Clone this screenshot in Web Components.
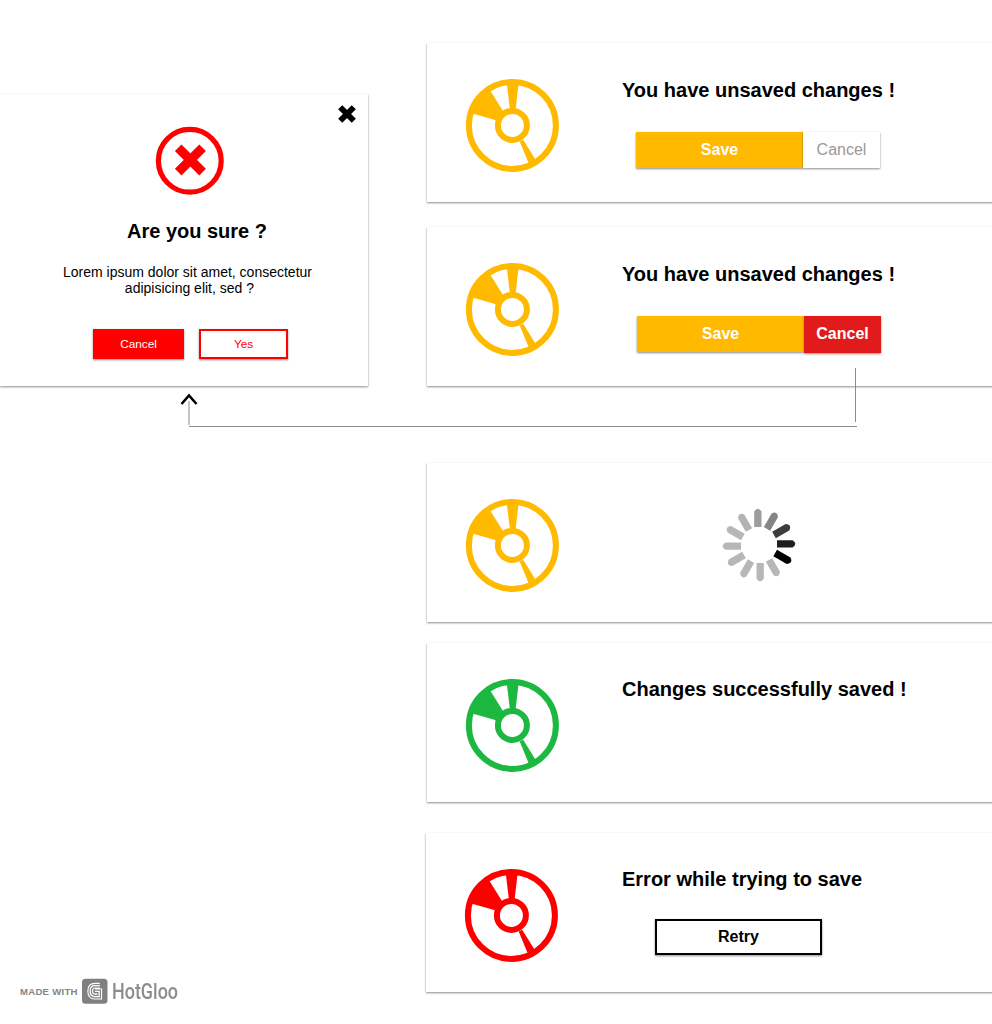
<!DOCTYPE html>
<html lang="en">
<head>
<meta charset="utf-8">
<title>Save states</title>
<style>
html,body{margin:0;padding:0;background:#fff}
body{font-family:"Liberation Sans",Arial,sans-serif;color:#000;width:992px;height:1024px;overflow:hidden}
</style>
</head>
<body>
<save-board></save-board>
<script>
const define = (name, html, setup) => {
  const tpl = document.createElement('template');
  tpl.innerHTML = html;
  customElements.define(name, class extends HTMLElement {
    constructor() {
      super();
      const root = this.attachShadow({mode: 'open'});
      root.append(tpl.content.cloneNode(true));
      if (setup) setup(root);
    }
  });
};

define('disc-icon', `
<style>:host{display:block;width:94px;height:94px;color:#ffba00}svg{display:block}</style>
<svg width="94" height="94" viewBox="-47.4 -47.4 94 94" fill="none" stroke="currentColor" stroke-width="6">
  <circle r="43.5"/><circle r="14.5"/>
  <g fill="currentColor" stroke="none">
    <path d="M-5.6-42L6.2-42L3.2-16L-2.5-16Z"/>
    <path d="M-41-12.2L-15.5-4.8L-9.4-14.5L-22.5-35.5Q-36-27-41-12.2Z"/>
    <path d="M7.3 16L10.8 14.4L23.8 35.3L16.9 39.3Z"/>
  </g>
</svg>`);

define('flat-button', `
<style>
:host{display:flex;box-sizing:border-box;align-items:center;justify-content:center;width:167px;height:36px;font-size:16px;line-height:18px;font-weight:bold;color:#fff;background:#ffba00;box-shadow:0 1px 2px rgba(0,0,0,.45)}
:host([kind=plain]){width:77px;background:#fff;color:#999;font-weight:normal}
:host([kind=danger]){width:77px;height:37px;padding-bottom:1px;background:#e11b1b}
:host([kind=outline]){background:#fff;color:#000;border:2px solid #000}
:host([kind=red]){width:91px;height:30px;background:#f00;font-size:11.8px;font-weight:normal}
:host([kind=redline]){width:89px;height:30px;background:#fff;color:#f00;border:2px solid #f00;font-size:11.8px;font-weight:normal}
</style><slot></slot>`);

define('status-card', `
<style>
:host{display:flex;box-sizing:border-box;height:159px;background:#fff;padding:35px 0 0 38px;box-shadow:0 1px 2px rgba(0,0,0,.45)}
.body{flex:1;margin:var(--body-top,0) 0 0 var(--body-left,63px);min-width:0}
h2{margin:0;font-size:20px;line-height:24px;font-weight:bold;white-space:nowrap}
.actions{display:flex;margin-top:30px}
</style>
<slot name="icon"></slot>
<div class="body"><h2><slot name="title"></slot></h2><div class="actions"><slot></slot></div></div>`);

// Twelve spokes, the darkest one leading at four o'clock.
const shades = ['#9d9d9d','#858585','#3c3c3c','#1e1e1e','#000','#b7b7b7','#b7b7b7','#b7b7b7','#b7b7b7','#b7b7b7','#b7b7b7','#b3b3b3'];
define('busy-spinner', `
<style>:host{display:block;width:74px;height:74px}svg{display:block;filter:blur(.6px)}</style>
<svg width="74" height="74" viewBox="-37 -37 74 74"></svg>`, root => {
  const svg = root.querySelector('svg');
  shades.forEach((shade, i) => {
    const bar = document.createElementNS('http://www.w3.org/2000/svg', 'path');
    bar.setAttribute('d', 'M-4.8-18V-33.5Q-3.2-36.3-1.2-36.3Q.9-36.3 2.5-33.5V-18Z');
    bar.setAttribute('fill', shade);
    bar.setAttribute('transform', `rotate(${i * 30})`);
    svg.append(bar);
  });
});

define('confirm-dialog', `
<style>
:host{display:flex;flex-direction:column;position:relative;box-sizing:border-box;width:368px;height:292px;background:#fff;box-shadow:0 1px 2px rgba(0,0,0,.45)}
.close{position:absolute;left:337px;top:10px}
.bad{display:block;margin:32px 0 0 155px}
h2{margin:23px 0 0 26px;text-align:center;font-size:20px;line-height:24px;white-space:nowrap}
p{margin:21px 0 0 62px;width:251px;text-align:center;font-size:14px;line-height:16px}
.actions{display:flex;gap:15px;margin:33px 0 0 93px}
</style>
<svg class="close" width="20" height="20" viewBox="-10 -10 20 20"><path d="M-6.8-6.8L6.8 6.8M6.8-6.8L-6.8 6.8" stroke="#000" stroke-width="5.8"/></svg>
<svg class="bad" width="70" height="70" viewBox="-35 -35 70 70" fill="none" stroke="#f00"><circle cx="-.2" cy="-.2" r="31.4" stroke-width="5.2"/><path d="M-11.8-13.3L12.6 11.1M12.6-13.3L-11.8 11.1" stroke-width="9.3"/></svg>
<h2><slot name="title"></slot></h2>
<p><slot name="text"></slot></p>
<div class="actions"><slot></slot></div>`);

define('flow-arrow', `
<style>:host{display:block;width:680px;height:64px}svg{display:block}</style>
<svg width="680" height="64" fill="none">
  <path d="M675.5 1V55" stroke="#8c8c8c"/>
  <path d="M9 59.5H677" stroke="#8f8b8b"/>
  <path d="M9 34V58" stroke="#c4c4c4" stroke-width="2"/>
  <path d="M1.5 37L9 28.5L16.5 37" stroke="#000" stroke-width="2.6"/>
</svg>`);

define('made-with', `
<style>
:host{display:flex;align-items:center;height:26px;color:#858585}
.m{font-size:9.6px;font-weight:bold;width:58px;white-space:nowrap;letter-spacing:.25px}
.logo{margin:0 4px}
.n{font-family:Roboto,sans-serif;font-size:22px;font-weight:500;line-height:26px;display:block;transform:scaleX(.815);transform-origin:0 50%;white-space:nowrap;margin-top:1px;color:#8d8d8d}
</style>
<span class="m">MADE WITH</span>
<svg class="logo" width="26" height="26" fill="none"><rect x="0" y="0.8" width="25.5" height="25" rx="3.5" fill="#808080"/>
<g id="g"><path d="M17.8 7.7H13Q8.2 7.7 8.2 13Q8.2 18.6 13 18.6H17.2V13.4H13" stroke="#fff" stroke-width="5.8"/><path d="M17.8 7.7H13Q8.2 7.7 8.2 13Q8.2 18.6 13 18.6H17.2V13.4H13" stroke="#808080" stroke-width="3.6"/><path d="M17.8 7.7H13Q8.2 7.7 8.2 13Q8.2 18.6 13 18.6H17.2V13.4H13" stroke="#fff" stroke-width="1.3"/></g></svg>
<span class="n">HotGloo</span>`);

define('save-board', `
<style>
:host{display:grid;grid-template-columns:368px 1fr;column-gap:59px;width:992px;height:1024px;position:relative;overflow:hidden}
.left{display:flex;flex-direction:column;padding-top:94px}
.right{display:flex;flex-direction:column;padding-top:43px;margin-right:-10px}
.c2{margin-top:25px}.c3{margin-top:77px}.c4{margin-top:21px;--body-top:-1px}.c5{margin:31px 0 0 -1px;--body-top:-1px;--body-left:64px}
.first{margin-left:14px}.second{margin-left:15px}.retry{margin:-2px 0 0 33px}
busy-spinner{margin:-20px 0 0 100px}
made-with{margin:592px 0 0 20px}
flow-arrow{position:absolute;left:180px;top:367px}
.green{color:#1cb841}.red{color:#f00}
</style>
<div class="left">
  <confirm-dialog>
    <span slot="title">Are you sure ?</span>
    <span slot="text">Lorem ipsum dolor sit amet, consectetur<br>&nbsp;adipisicing elit, sed ?</span>
    <flat-button kind="red">Cancel</flat-button><flat-button kind="redline">Yes</flat-button>
  </confirm-dialog>
  <made-with></made-with>
</div>
<div class="right">
  <status-card><disc-icon slot="icon"></disc-icon><span slot="title">You have unsaved changes !</span>
    <flat-button class="first">Save</flat-button><flat-button kind="plain">Cancel</flat-button></status-card>
  <status-card class="c2"><disc-icon slot="icon"></disc-icon><span slot="title">You have unsaved changes !</span>
    <flat-button class="second">Save</flat-button><flat-button kind="danger">Cancel</flat-button></status-card>
  <status-card class="c3"><disc-icon slot="icon"></disc-icon><busy-spinner></busy-spinner></status-card>
  <status-card class="c4"><disc-icon slot="icon" class="green"></disc-icon><span slot="title">Changes successfully saved !</span></status-card>
  <status-card class="c5"><disc-icon slot="icon" class="red"></disc-icon><span slot="title">Error while trying to save</span>
    <flat-button kind="outline" class="retry">Retry</flat-button></status-card>
</div>
<flow-arrow></flow-arrow>`);
</script>
</body>
</html>
